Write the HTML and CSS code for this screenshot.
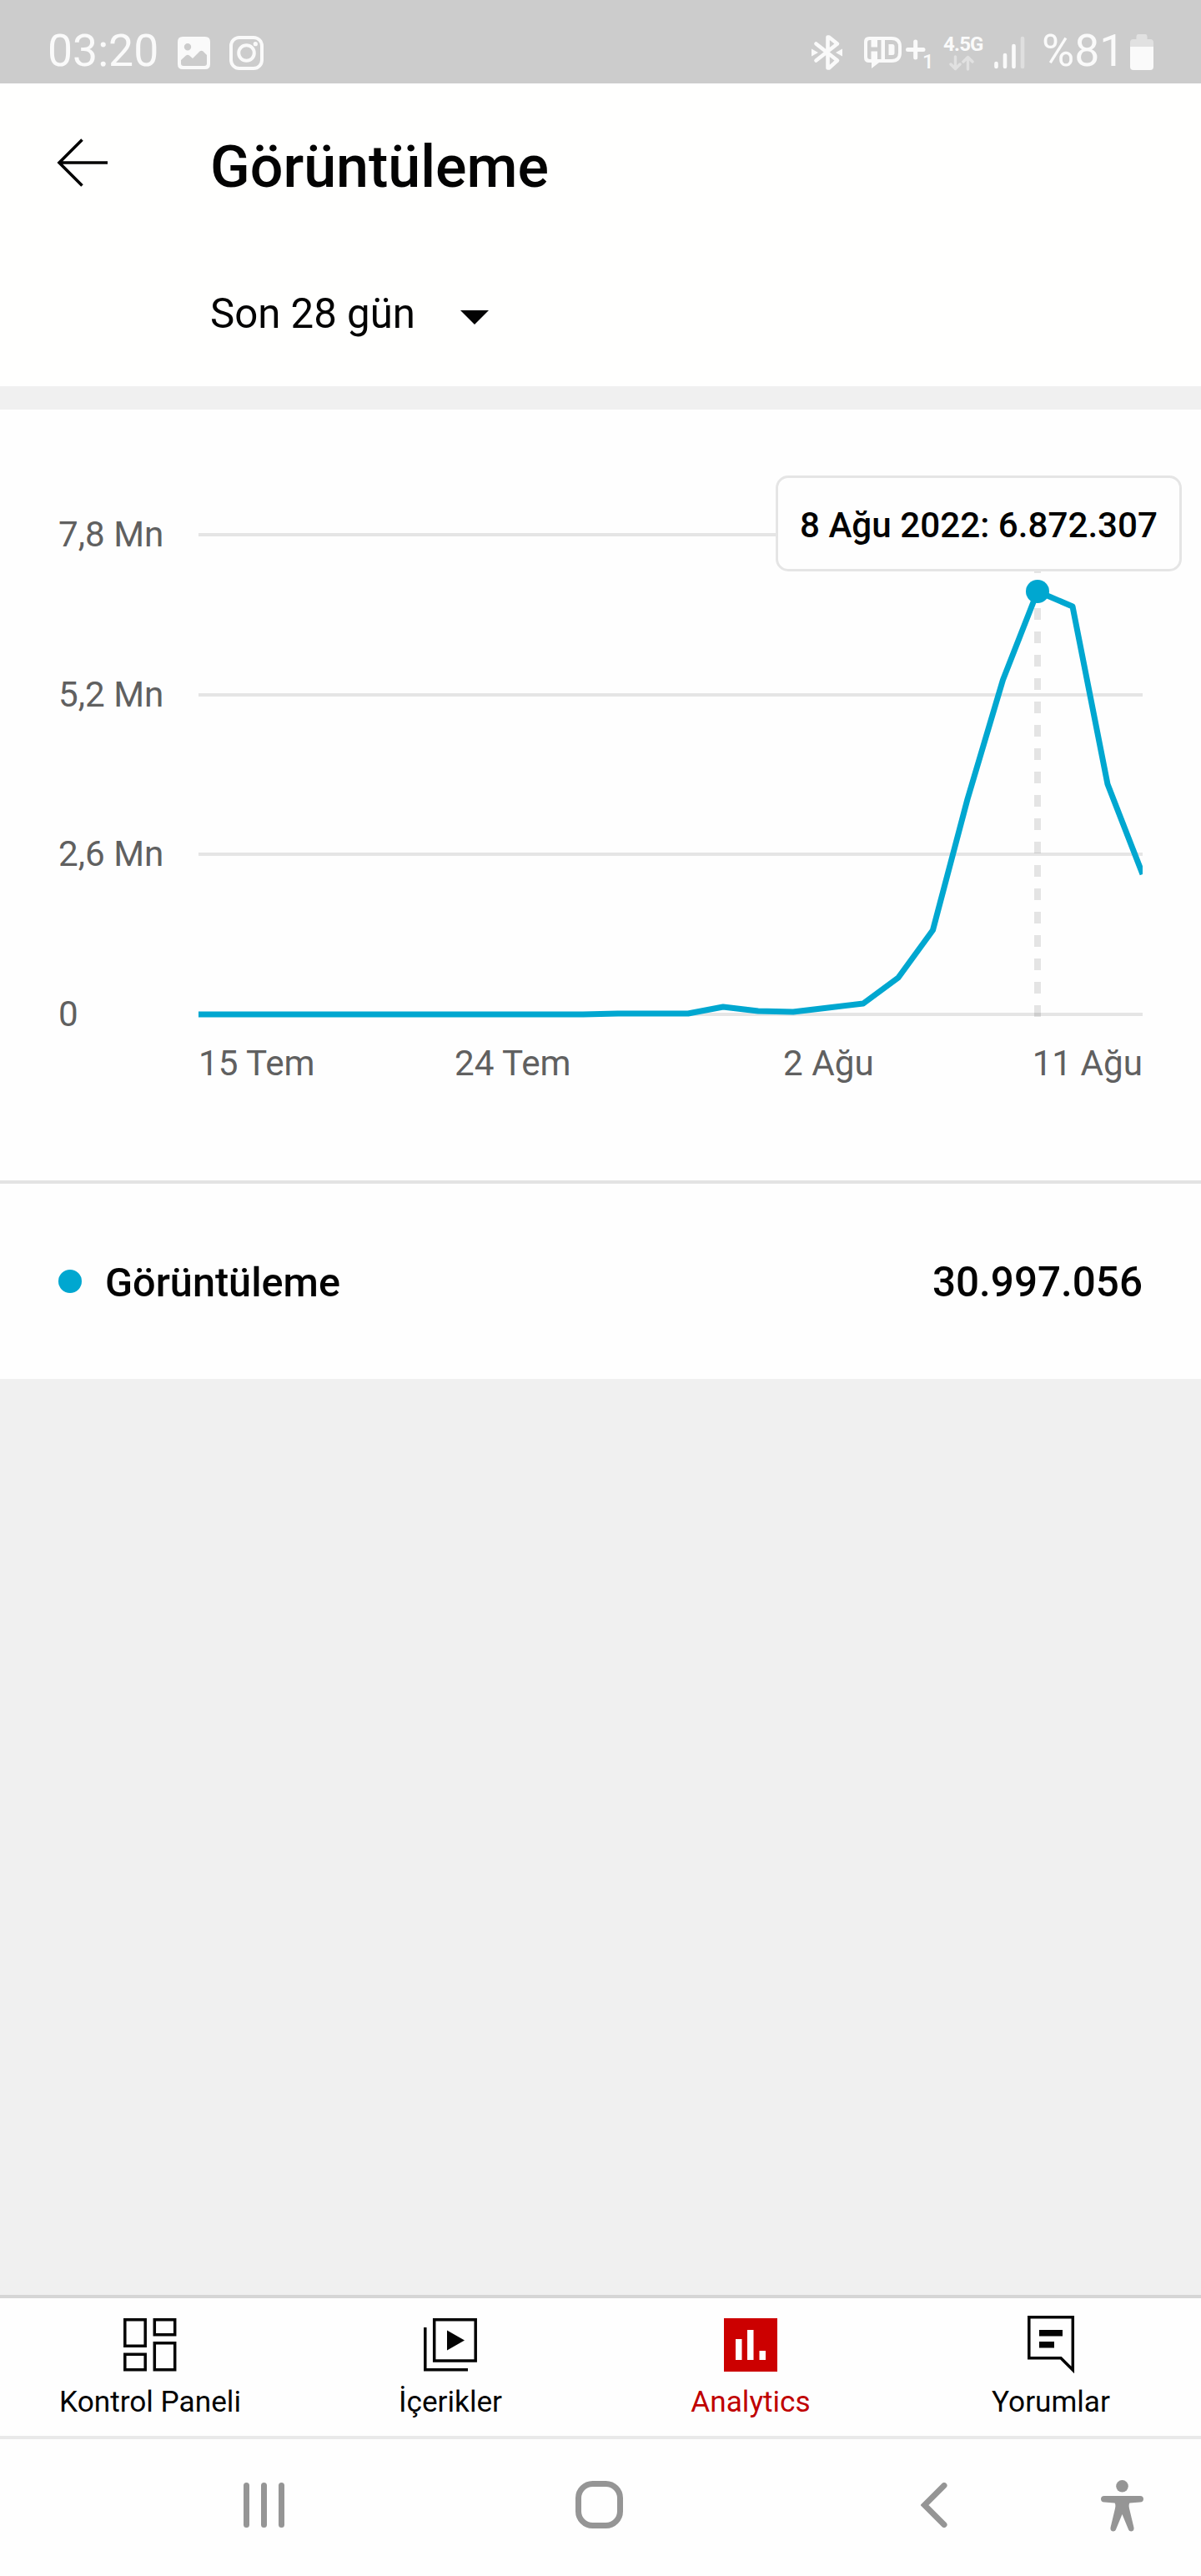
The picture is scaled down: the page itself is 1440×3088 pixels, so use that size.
FILE: index.html
```
<!DOCTYPE html>
<html lang="tr">
<head>
    <meta charset="UTF-8">
    <meta name="viewport" content="width=device-width, initial-scale=1.0">
    <title>Görüntüleme</title>
    <link rel="stylesheet" href="styles.css">
</head>
<body>
    <div class="status-bar">
        <span class="status-text time">03:20</span>
        <svg class="icon-image" width="39" height="39" viewBox="0 0 39 39">
            <path fill="#fafafa" fill-rule="evenodd" d="M6 0H33Q39 0 39 6V33Q39 39 33 39H6Q0 39 0 33V6Q0 0 6 0ZM12 8A4.2 4.2 0 1 0 12 16.4A4.2 4.2 0 1 0 12 8ZM4 28V32Q4 35 7 35H32Q35 35 35 32V22L30.500 17.500Q28.500 16 26.500 17.500L18 26L14 22.500Q12 21 10 22.500Z"/>
        </svg>
        <svg class="icon-camera" width="41" height="41" viewBox="0 0 41 41" fill="none" stroke="#fafafa">
            <rect x="2" y="2" width="37" height="37" rx="10" stroke-width="4"/>
            <circle cx="20.500" cy="20.500" r="9.300" stroke-width="4"/>
            <circle cx="31.300" cy="9.700" r="2.600" fill="#fafafa" stroke="none"/>
        </svg>
        <svg class="icon-bluetooth" width="38" height="44" viewBox="0 0 38 44">
            <path fill="none" stroke="#fafafa" stroke-width="4.600" stroke-linecap="round" stroke-linejoin="round" d="M5.500 11.500L31 31.500L21 40.500H19.500V3.500H21L31 11.500L5.500 31.500"/>
            <path fill="#fafafa" d="M0 17.500L8 22L0 26.500ZM37 17.500L29 22L37 26.500Z"/>
        </svg>
        <svg class="icon-hd" width="84" height="40" viewBox="0 0 84 40">
            <path fill="#fafafa" d="M6 0H33Q45 0 45 12V19Q45 31 33 31H18L9 38V31H6Q0 31 0 25V6Q0 0 6 0Z"/>
            <path fill="#cccccc" d="M4 7Q4 4 7 4H8.500V12.500H16V4H20.500V27H16V17.500H8.500V27H7Q4 27 4 24Z"/>
            <path fill="#cccccc" fill-rule="evenodd" d="M25 4H33Q41 4 41 12V19Q41 27 33 27H25ZM29.500 9V22H34Q36.500 22 36.500 19.500V11.500Q36.500 9 34 9Z"/>
            <path stroke="#fafafa" stroke-width="5" stroke-linecap="round" d="M52.500 15.500H71M61.700 6V25"/>
            <text class="hd-sub" x="70" y="38">1</text>
        </svg>
        <div class="network">
            <span>4.5G</span>
            <svg width="30" height="19" viewBox="0 0 30 19" fill="none" stroke="#e1e1e1" stroke-width="3.400" stroke-linecap="round" stroke-linejoin="round">
                <path d="M7.500 2V16M2 11L7.500 16.500L13 11M22.500 17V2.500M17 8L22.500 2.500L28 8"/>
            </svg>
        </div>
        <svg class="icon-signal" width="37" height="42" viewBox="0 0 37 42" stroke="#fafafa" stroke-width="4.600" stroke-linecap="round">
            <path d="M2.500 34V38M13 24V38M23.500 13V38"/>
            <path stroke="#dfdfdf" d="M34 4V38"/>
        </svg>
        <span class="status-text battery-text">%81</span>
        <svg class="icon-battery" width="28" height="43" viewBox="0 0 28 43">
            <path fill="#e1e1e1" d="M0 10Q0 6 4 6H7.500V3Q7.500 0 10 0H18Q20.500 0 20.500 3V6H24Q28 6 28 10V15H0Z"/>
            <path fill="#fafafa" d="M0 15H28V39Q28 43 24 43H4Q0 43 0 39Z"/>
        </svg>
    </div>

    <header class="header">
        <div class="title-row">
            <svg class="back" width="62" height="58" viewBox="0 0 62 58" fill="none" stroke="#030303" stroke-width="3.600">
                <path d="M61 29H3M30.500 1.500L3 29L30.500 56.500"/>
            </svg>
            <h1 class="title">Görüntüleme</h1>
        </div>
        <div class="period">
            <span>Son 28 gün</span>
            <svg width="34" height="17" viewBox="0 0 34 17"><path fill="#030303" d="M0 0H34L17 17Z"/></svg>
        </div>
    </header>

    <section class="chart">
        <svg class="plot" width="1440" height="924" viewBox="0 491 1440 924">
            <clipPath id="plotArea"><rect x="238" y="600" width="1132" height="640"/></clipPath>
            <path class="grid" d="M238 641H1370M238 833H1370M238 1024H1370M238 1216H1370"/>
            <g class="label">
                <text x="70" y="655">7,8 Mn</text>
                <text x="70" y="847">5,2 Mn</text>
                <text x="70" y="1038">2,6 Mn</text>
                <text x="70" y="1230">0</text>
                <text x="238" y="1289">15 Tem</text>
                <text x="545" y="1289">24 Tem</text>
                <text x="939" y="1289">2 Ağu</text>
                <text x="1370" y="1289" text-anchor="end">11 Ağu</text>
            </g>
            <path class="cursor" d="M1244 1219V673"/>
            <polyline class="line" clip-path="url(#plotArea)" points="238,1216 699,1216 741,1215 825,1215 867,1207 909,1212 951,1213 993,1208 1035,1203 1077,1172 1118.500,1115 1160,958 1202.500,815 1244,709 1286,727 1328,940 1370,1048"/>
            <circle class="dot" cx="1244" cy="709" r="14"/>
        </svg>
        <div class="tooltip">8 Ağu 2022: 6.872.307</div>
    </section>

    <section class="legend">
        <span class="legend-dot"></span>
        <span class="legend-name">Görüntüleme</span>
        <span class="legend-value">30.997.056</span>
    </section>

    <main class="empty"></main>

    <nav class="tabs">
        <div class="tab">
            <svg width="72" height="72" viewBox="0 0 72 72" fill="none" stroke="#030303" stroke-width="3.500">
                <path d="M5.800 5.800H30.200V37.200H5.800ZM41.300 5.800H65.700V23.700H41.300ZM5.800 47.300H30.200V65.700H5.800ZM41.300 33.800H65.700V65.700H41.300Z"/>
            </svg>
            <span>Kontrol Paneli</span>
        </div>
        <div class="tab">
            <svg width="72" height="72" viewBox="0 0 72 72" fill="none" stroke="#030303" stroke-width="3.500">
                <path d="M16.700 5.800H66.200V55H16.700ZM5.800 15V65.700H57"/>
                <path fill="#030303" stroke="none" d="M32 18.500L53 30.500L32 42.500Z"/>
            </svg>
            <span>İçerikler</span>
        </div>
        <div class="tab active">
            <svg width="72" height="72" viewBox="0 0 72 72">
                <path fill="#cc0000" d="M4 4H68V68H4Z"/>
                <path fill="#fff" d="M18 29H25.500V54H18ZM32 18H39.500V54H32ZM46.500 43H54V54H46.500Z"/>
            </svg>
            <span>Analytics</span>
        </div>
        <div class="tab">
            <svg width="72" height="72" viewBox="0 0 72 72">
                <path fill="none" stroke="#030303" stroke-width="3.500" d="M9.800 2.700H62.300V66L48 51.700H9.800Z"/>
                <path fill="#030303" d="M22 18H50V25.500H22ZM22 32H40V39.500H22Z"/>
            </svg>
            <span>Yorumlar</span>
        </div>
    </nav>

    <div class="system-bar">
        <svg class="recents" width="50" height="54" viewBox="0 0 50 54"><path d="M3.500 3.500V50.500M24.500 3.500V50.500M45.500 3.500V50.500"/></svg>
        <svg class="home" width="57" height="57" viewBox="0 0 57 57"><rect x="3.500" y="3.500" width="50" height="50" rx="17"/></svg>
        <svg class="go-back" width="32" height="54" viewBox="0 0 32 54"><path d="M28 3.500L4.500 27L28 50.500"/></svg>
        <svg class="access" width="52" height="62" viewBox="0 0 52 62">
            <g fill="#959595" stroke="none">
                <circle cx="25.500" cy="7.300" r="7.300"/>
                <path d="M4 19H47Q51 19 51 22.800Q51 26.500 47 26.500L34.500 27.500Q33 29 34 34L39.500 57Q40 61 36.500 61.500Q33.500 61.500 32.500 58L25.500 41L18.500 58Q17.500 61.500 14.500 61.500Q11 61 11.500 57L17 34Q18 29 16.500 27.500L4 26.500Q0 26.500 0 22.800Q0 19 4 19Z"/>
            </g>
        </svg>
    </div>
</body>
</html>
```
FILE: styles.css
```
* {
    box-sizing: border-box;
}
body {
    margin: 0;
    width: 1440px;
    height: 3088px;
    display: flex;
    flex-direction: column;
    font-family: Roboto, "Liberation Sans", sans-serif;
    color: #030303;
    background-color: #fefefe;
}
svg {
    display: block;
    flex-shrink: 0;
}
.status-bar {
    height: 100px;
    padding: 41px 0 0 57px;
    display: flex;
    align-items: flex-start;
    background-color: #cccccc;
    color: #fafafa;
}
.status-text {
    font-size: 53.5px;
    line-height: 64px;
    margin-top: -12px;
}
.time {
    width: 156px;
}
.icon-image {
    margin-top: 3px;
}
.icon-camera {
    margin: 2px 0 0 23px;
}
.icon-bluetooth {
    margin-left: 657px;
}
.icon-hd {
    margin: 3px 0 0 25px;
}
.hd-sub {
    font-size: 24px;
    font-weight: 500;
    fill: #fafafa;
}
.network {
    width: 60px;
    margin-left: 11px;
    font-size: 24px;
    font-weight: 700;
    line-height: 28px;
}
.network span {
    display: block;
    margin-top: -2px;
    letter-spacing: -0.8px;
}
.network svg {
    margin: -1px 0 0 7px;
}
.icon-signal {
    margin: 1px 0 0 1px;
}
.battery-text {
    width: 106px;
    margin-left: 20px;
}
.header {
    height: 363px;
    padding-top: 60px;
    background-color: #fffffe;
}
.title-row {
    height: 80px;
    padding-left: 68px;
    display: flex;
}
.back {
    margin-top: 6px;
}
.title {
    margin: 0 0 0 122px;
    font-size: 70px;
    font-weight: 500;
    line-height: 80px;
}
.period {
    height: 60px;
    margin-top: 106px;
    padding-left: 252px;
    display: flex;
    align-items: center;
    gap: 54px;
    font-size: 49.2px;
}
.period svg {
    margin-top: 8px;
}
.chart {
    position: relative;
    height: 928px;
    border-bottom: 4px solid #e3e3e3;
}
.header {
    margin-bottom: 28px;
    box-shadow: 0 28px 0 #f0f0f0;
}
.grid {
    stroke: #e5e5e5;
    stroke-width: 4;
}
.label {
    font-size: 42.2px;
    fill: #606060;
}
.cursor {
    stroke: rgba(0, 0, 0, 0.1);
    stroke-width: 8;
    stroke-dasharray: 14 14;
}
.line {
    fill: none;
    stroke: #00a7d0;
    stroke-width: 7;
    stroke-linejoin: round;
}
.dot {
    fill: #00a7d0;
}
.tooltip {
    position: absolute;
    left: 930px;
    top: 79px;
    width: 487px;
    height: 115px;
    border: 3px solid #e5e5e5;
    border-radius: 15px;
    background-color: #fefefe;
    font-size: 42.2px;
    font-weight: 500;
    line-height: 113px;
    text-align: center;
    white-space: nowrap;
}
.legend {
    height: 234px;
    padding: 2px 70px 0;
    display: flex;
    align-items: center;
    font-weight: 500;
}
.legend-dot {
    width: 28px;
    height: 28px;
    margin: -3px 28px 0 0;
    border-radius: 50%;
    background-color: #00a7d0;
}
.legend-name {
    font-size: 48.6px;
}
.legend-value {
    margin-left: auto;
    font-size: 49.4px;
}
.empty {
    height: 1098px;
    background-color: #f0f0f0;
}
.tabs {
    height: 169px;
    border-top: 4px solid #d6d6d6;
    display: flex;
    font-size: 35.2px;
}
.tab {
    flex: 1;
    padding-top: 20px;
    display: flex;
    flex-direction: column;
    align-items: center;
}
.tab span {
    margin-top: 11px;
    line-height: 42px;
}
.active {
    color: #c00000;
}
.system-bar {
    height: 168px;
    border-top: 4px solid #e9e9e9;
    padding-top: 49px;
    display: flex;
}
.system-bar svg {
    fill: none;
    stroke: #959595;
    stroke-width: 7;
    stroke-linecap: round;
    stroke-linejoin: round;
}
.recents {
    margin: 3px 0 0 292px;
}
.home {
    margin: 1px 0 0 348px;
}
.system-bar .go-back {
    margin: 3px 0 0 357px;
    stroke-linejoin: miter;
}
.access {
    margin-left: 184px;
}
```
